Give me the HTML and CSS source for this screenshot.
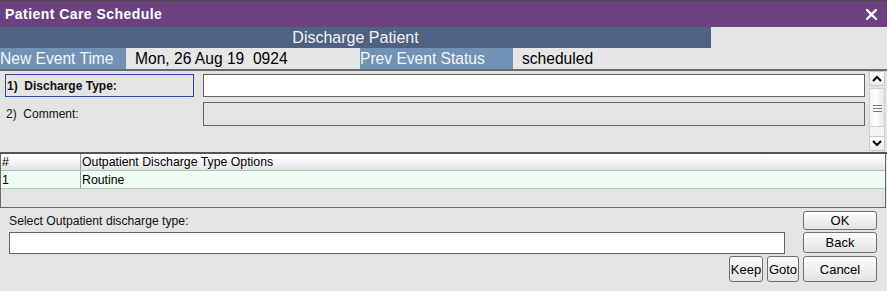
FILE: index.html
```html
<!DOCTYPE html>
<html>
<head>
<meta charset="utf-8">
<title>Patient Care Schedule</title>
<link rel="stylesheet" href="styles.css">
</head>
<body>
<div class="window">
  <div class="titlebar">
    <span class="title">Patient Care Schedule</span>
    <svg class="close" width="11" height="11" viewBox="0 0 11 11"><path d="M1 1 L10 10 M10 1 L1 10" stroke="#fff" stroke-width="2.4" stroke-linecap="square"/></svg>
  </div>
  <div class="subhead">
    <div class="subhead-title">Discharge Patient</div>
  </div>
  <div class="event-row">
    <div class="ev-label ev-label-1">New Event Time</div>
    <div class="ev-value ev-value-1">Mon, 26 Aug 19&nbsp; 0924</div>
    <div class="ev-label ev-label-2">Prev Event Status</div>
    <div class="ev-value ev-value-2">scheduled</div>
  </div>
  <div class="fields-panel">
    <div class="fields">
      <div class="field-row row-1">
        <div class="field-label active">1)&nbsp; Discharge Type:</div>
        <div class="field-input white"></div>
      </div>
      <div class="field-row row-2">
        <div class="field-label">2)&nbsp; Comment:</div>
        <div class="field-input grey"></div>
      </div>
    </div>
    <div class="scrollbar">
      <div class="sb-btn">
        <svg width="10" height="7" viewBox="0 0 10 7"><path d="M1 6 L5 2 L9 6" fill="none" stroke="#000" stroke-width="2"/></svg>
      </div>
      <div class="sb-thumb">
        <svg width="9" height="8" viewBox="0 0 9 8"><path d="M0 1.5 H9 M0 4.5 H9 M0 7.5 H9" stroke="#7a7a7a" stroke-width="1"/></svg>
      </div>
      <div class="sb-track"></div>
      <div class="sb-btn">
        <svg width="10" height="7" viewBox="0 0 10 7"><path d="M1 1 L5 5 L9 1" fill="none" stroke="#000" stroke-width="2"/></svg>
      </div>
    </div>
  </div>
  <div class="options">
    <div class="opt-head">
      <div class="c1">#</div>
      <div class="c2">Outpatient Discharge Type Options</div>
    </div>
    <div class="opt-row">
      <div class="c1">1</div>
      <div class="c2">Routine</div>
    </div>
  </div>
  <div class="bottom">
    <div class="prompt">Select Outpatient discharge type:</div>
    <div class="prompt-input"></div>
    <button class="btn btn-ok">OK</button>
    <button class="btn btn-back">Back</button>
    <button class="btn btn-keep">Keep</button>
    <button class="btn btn-goto">Goto</button>
    <button class="btn btn-cancel">Cancel</button>
  </div>
</div>
</body>
</html>
```

FILE: styles.css
```css
* { box-sizing: border-box; }
html, body {
  margin: 0;
  padding: 0;
  background: #e4e4e4;
}
body {
  width: 887px;
  height: 291px;
  overflow: hidden;
  font-family: "Liberation Sans", Arial, sans-serif;
  color: #000;
}
.window {
  width: 887px;
  height: 291px;
  background: #e4e4e4;
}
.titlebar {
  height: 27px;
  border-top: 1px solid #4e4e4e;
  background: #6b4180;
  display: flex;
  align-items: center;
  justify-content: space-between;
  padding: 0 10px 0 5px;
}
.title {
  color: #fff;
  font-weight: bold;
  font-size: 14px;
  letter-spacing: 0.45px;
}
.close { display: block; }
.subhead {
  height: 21px;
  display: flex;
}
.subhead-title {
  width: 711px;
  background: #506282;
  color: #f2f2f2;
  font-size: 16px;
  text-align: center;
  line-height: 21px;
}
.event-row {
  height: 21px;
  display: flex;
  font-size: 15.6px;
  line-height: 21px;
}
.ev-label {
  background: #7192b5;
  color: #f4f6f8;
  white-space: nowrap;
}
.ev-label-1 { width: 126px; }
.ev-label-2 { width: 153px; }
.ev-value {
  background: #e6e6e6;
  padding-left: 9px;
  white-space: nowrap;
}
.ev-value-1 { width: 234px; }
.ev-value-2 { flex: 1; }
.fields-panel {
  height: 85px;
  border-top: 2px solid #6a6a6a;
  border-bottom: 2px solid #555;
  display: flex;
  padding-right: 2px;
}
.fields {
  flex: 1;
  padding-top: 3px;
  padding-right: 4px;
}
.field-row {
  display: flex;
  align-items: center;
}
.row-1 { height: 23px; }
.row-2 { height: 24px; margin-top: 5px; }
.field-label {
  width: 198px;
  padding-left: 6px;
  font-size: 12px;
  white-space: nowrap;
  color: #111;
}
.field-label.active {
  margin-left: 5px;
  width: 189px;
  height: 23px;
  border: 1px solid #3342a6;
  padding-left: 1px;
  font-weight: bold;
  display: flex;
  align-items: center;
  margin-right: 9px;
}
.row-2 .field-label { width: 203px; }
.field-input {
  flex: 1;
  height: 100%;
  border: 1px solid #646464;
}
.field-input.white { background: #fff; }
.field-input.grey { background: #e4e4e4; }
.scrollbar {
  width: 16px;
  display: flex;
  flex-direction: column;
}
.sb-btn {
  height: 15px;
  background: linear-gradient(#ffffff, #ececec);
  border: 1px solid #c8c8c8;
  display: flex;
  align-items: center;
  justify-content: center;
}
.sb-thumb {
  height: 39px;
  margin-top: 2px;
  background: linear-gradient(90deg, #f2f2f2, #ffffff 40%, #e8e8e8);
  border: 1px solid #cfcfcf;
  display: flex;
  align-items: center;
  justify-content: center;
}
.sb-track {
  height: 9px;
  background: #f4f4f4;
  border-left: 1px solid #d0d0d0;
  border-right: 1px solid #d0d0d0;
}
.options {
  height: 54px;
  border-left: 1px solid #6a6a6a;
  border-right: 1px solid #6a6a6a;
  border-bottom: 1px solid #6a6a6a;
  margin-right: 1px;
  font-size: 12.3px;
}
.opt-head, .opt-row {
  display: flex;
}
.opt-head {
  height: 17px;
  background: linear-gradient(#ffffff, #f6f6f6 50%, #e2e2e2);
  border-bottom: 1px solid #b8b8b8;
  line-height: 17px;
}
.opt-row {
  height: 18px;
  background: #ecfdf2;
  border-bottom: 1px solid #c4c4c4;
  line-height: 18px;
}
.c1 {
  width: 80px;
  padding-left: 1px;
  border-right: 1px solid #9a9a9a;
}
.c2 {
  flex: 1;
  padding-left: 1px;
}
.bottom {
  display: grid;
  grid-template-columns: 720px 34px 4px 32px 4px 74px;
  grid-template-rows: 19px 21px 27px;
  row-gap: 2px;
  padding: 3px 0 0 9px;
}
.prompt {
  grid-column: 1 / 2;
  grid-row: 1;
  font-size: 12.2px;
  align-self: center;
  padding-top: 1px;
  color: #111;
}
.prompt-input {
  grid-column: 1 / 5;
  grid-row: 2;
  width: 776px;
  height: 22px;
  background: #fff;
  border: 1px solid #646464;
}
.btn {
  font-family: "Liberation Sans", Arial, sans-serif;
  font-size: 13px;
  color: #000;
  background: linear-gradient(#fdfdfd, #f0f0f0 50%, #e2e2e2);
  border: 1px solid #707070;
  border-radius: 3px;
  padding: 0;
  margin: 0;
}
.btn-ok { grid-column: 6; grid-row: 1; }
.btn-back { grid-column: 6; grid-row: 2; }
.btn-keep { grid-column: 2; grid-row: 3; margin-top: 1px; }
.btn-goto { grid-column: 4; grid-row: 3; margin-top: 1px; }
.btn-cancel { grid-column: 6; grid-row: 3; margin-top: 1px; }
```
